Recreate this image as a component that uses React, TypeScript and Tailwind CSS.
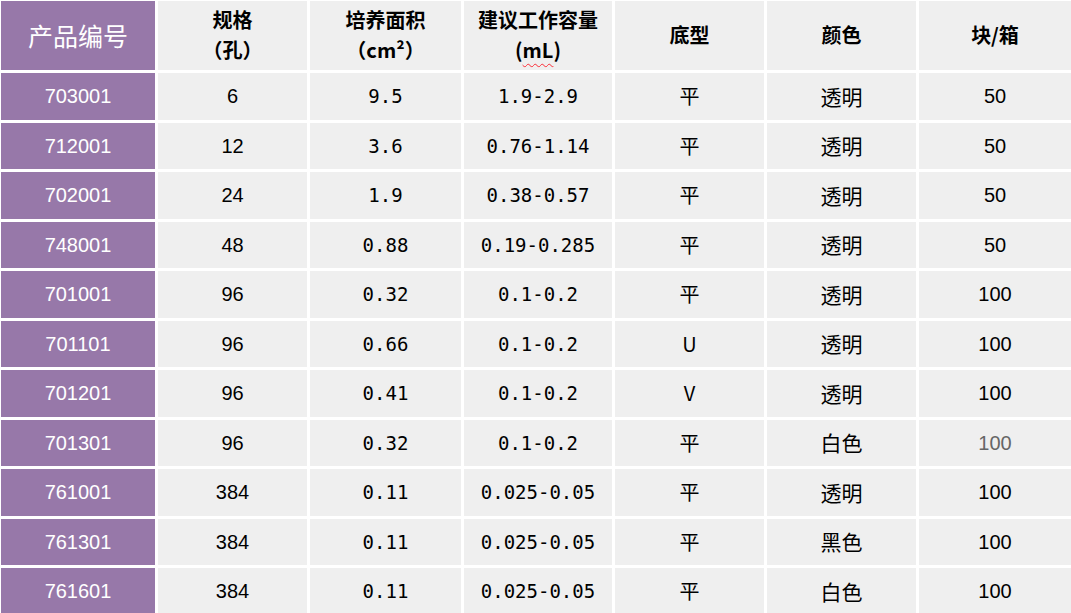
import React from "react"

interface Row {
  code: string
  wells: string
  area: string
  volume: string
  bottom: string
  color: string
  perBox: string
  muted?: boolean
}

const rows: Row[] = [
  { code: "703001", wells: "6", area: "9.5", volume: "1.9-2.9", bottom: "平", color: "透明", perBox: "50" },
  { code: "712001", wells: "12", area: "3.6", volume: "0.76-1.14", bottom: "平", color: "透明", perBox: "50" },
  { code: "702001", wells: "24", area: "1.9", volume: "0.38-0.57", bottom: "平", color: "透明", perBox: "50" },
  { code: "748001", wells: "48", area: "0.88", volume: "0.19-0.285", bottom: "平", color: "透明", perBox: "50" },
  { code: "701001", wells: "96", area: "0.32", volume: "0.1-0.2", bottom: "平", color: "透明", perBox: "100" },
  { code: "701101", wells: "96", area: "0.66", volume: "0.1-0.2", bottom: "U", color: "透明", perBox: "100" },
  { code: "701201", wells: "96", area: "0.41", volume: "0.1-0.2", bottom: "V", color: "透明", perBox: "100" },
  { code: "701301", wells: "96", area: "0.32", volume: "0.1-0.2", bottom: "平", color: "白色", perBox: "100", muted: true },
  { code: "761001", wells: "384", area: "0.11", volume: "0.025-0.05", bottom: "平", color: "透明", perBox: "100" },
  { code: "761301", wells: "384", area: "0.11", volume: "0.025-0.05", bottom: "平", color: "黑色", perBox: "100" },
  { code: "761601", wells: "384", area: "0.11", volume: "0.025-0.05", bottom: "平", color: "白色", perBox: "100" },
]

const sans = "font-['Liberation_Sans','Noto_Sans_CJK_SC',sans-serif]"
const cjk = "font-['Noto_Sans_CJK_SC',sans-serif]"
const mono = "font-['DejaVu_Sans_Mono','Noto_Sans_CJK_SC',monospace]"

const cell = "bg-[#efefef] flex items-center justify-center"
const head = `${cell} flex-col text-black ${cjk} font-bold text-[20px] leading-[30px] pb-[2px]`

export default function App() {
  return (
    <div className="w-[1071px] h-[613px] bg-white overflow-hidden pt-[1px] pl-[1px]">
      <div className="grid grid-cols-[154px_149px_151px_148px_149px_149px_1fr] grid-rows-[69px_repeat(11,46.5px)] gap-[3px]">
        <div className={`bg-[#9778a9] flex items-center justify-center text-white text-[25px] ${cjk}`}>产品编号</div>
        <div className={head}>
          <span>规格</span>
          <span>（孔）</span>
        </div>
        <div className={head}>
          <span>培养面积</span>
          <span>（cm²）</span>
        </div>
        <div className={head}>
          <span>建议工作容量</span>
          <span>
            (<span className="underline decoration-wavy decoration-red-500 decoration-1 underline-offset-[5px]">mL</span>)
          </span>
        </div>
        <div className={head}>底型</div>
        <div className={head}>颜色</div>
        <div className={head}>块/箱</div>

        {rows.map((r) => (
          <React.Fragment key={r.code}>
            <div className={`bg-[#9778a9] flex items-center justify-center text-white text-[20px] ${sans}`}>{r.code}</div>
            <div className={`${cell} text-black text-[20px] ${sans}`}>{r.wells}</div>
            <div className={`${cell} text-black text-[19px] ${mono}`}>{r.area}</div>
            <div className={`${cell} text-black text-[19px] ${mono}`}>{r.volume}</div>
            <div className={`${cell} text-black text-[20px] ${cjk}`}>{r.bottom}</div>
            <div className={`${cell} text-black text-[21px] ${cjk}`}>{r.color}</div>
            <div className={`${cell} text-[20px] ${sans} ${r.muted ? "text-[#666666]" : "text-black"}`}>{r.perBox}</div>
          </React.Fragment>
        ))}
      </div>
    </div>
  )
}
